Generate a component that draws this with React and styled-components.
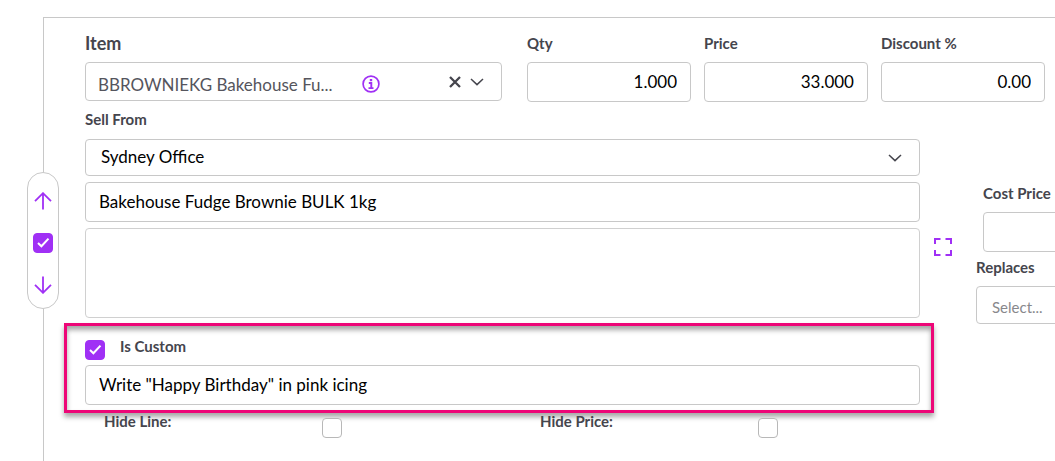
import React, { useState } from "react";
import styled, { createGlobalStyle } from "styled-components";

const ChevronIcon = () => (
  <svg width="14" height="8" viewBox="0 0 14 8" fill="none" aria-hidden="true">
    <path d="M1 1l6 5.600L13 1" stroke="#45454d" strokeWidth="1.500" />
  </svg>
);

const ClearIcon = () => (
  <svg width="12" height="12" viewBox="0 0 12 12" fill="none" aria-hidden="true">
    <path d="m1 1 10 10M11 1 1 11" stroke="#45454d" strokeWidth="2.300" />
  </svg>
);

const InfoIcon = () => (
  <svg width="18" height="18" viewBox="0 0 18 18" fill="none" aria-hidden="true">
    <circle cx="9" cy="9" r="7.900" stroke="#a030f5" strokeWidth="1.700" />
    <rect x="7.800" y="4" width="2.400" height="2.200" fill="#a030f5" />
    <path d="M6.800 8h2.500v5M6.500 13.100h5" stroke="#a030f5" strokeWidth="1.900" />
  </svg>
);

const ArrowIcon = ({ down }) => (
  <svg width="18" height="18" viewBox="0 0 18 18" fill="none" aria-hidden="true">
    <path
      d={down ? "M9 .5v16M1 8.800l8 8 8-8" : "M9 17.500v-16M1 9.200l8-8 8 8"}
      stroke="#a030f5"
      strokeWidth="1.800"
    />
  </svg>
);

const ExpandIcon = () => (
  <svg width="18" height="18" viewBox="0 0 18 18" fill="none" aria-hidden="true">
    <path
      d="M1 6V1h5.500M11.500 1H17v5M17 12v5h-5.500M6.500 17H1v-5"
      stroke="#a030f5"
      strokeWidth="2"
    />
  </svg>
);

const Checkbox = ({ id, defaultChecked = false, label }) => {
  const [isChecked, setIsChecked] = useState(defaultChecked);

  return (
    <CheckWrap>
      <CheckInput
        type="checkbox"
        id={id}
        aria-label={label}
        checked={isChecked}
        onChange={() => setIsChecked(!isChecked)}
      />
      {isChecked && (
        <CheckMark viewBox="0 0 20 20" aria-hidden="true">
          <path d="m5 10 3.400 3.300L15.500 5.600" />
        </CheckMark>
      )}
    </CheckWrap>
  );
};

const amounts = [
  { id: "qty", label: "Qty", value: "1.000" },
  { id: "price", label: "Price", value: "33.000" },
  { id: "discount", label: "Discount %", value: "0.00" },
];

const App = () => {
  return (
    <Page>
      <GlobalStyle />
      <Panel>
        <TopRow>
          <Field>
            <ItemLabel htmlFor="item">Item</ItemLabel>
            <ItemBox>
              <ItemInput id="item" readOnly value="BBROWNIEKG Bakehouse Fu..." />
              <InfoButton type="button" aria-label="Item details">
                <InfoIcon />
              </InfoButton>
              <ItemActions>
                <IconButton type="button" aria-label="Clear item">
                  <ClearIcon />
                </IconButton>
                <IconButton type="button" aria-label="Open item list">
                  <ChevronIcon />
                </IconButton>
              </ItemActions>
            </ItemBox>
          </Field>
          <Amounts>
            {amounts.map((amount) => (
              <Field key={amount.id}>
                <Label htmlFor={amount.id}>{amount.label}</Label>
                <AmountInput id={amount.id} defaultValue={amount.value} />
              </Field>
            ))}
          </Amounts>
        </TopRow>

        <Body>
          <div>
            <Details>
              <SellFromLabel htmlFor="sellFrom">Sell From</SellFromLabel>
              <SelectWrap>
                <Select id="sellFrom">
                  <option>Sydney Office</option>
                </Select>
                <SelectArrow>
                  <ChevronIcon />
                </SelectArrow>
              </SelectWrap>
              <TextInput
                aria-label="Description"
                defaultValue="Bakehouse Fudge Brownie BULK 1kg"
              />
              <Notes aria-label="Notes" />
              <ExpandButton type="button" aria-label="Expand notes">
                <ExpandIcon />
              </ExpandButton>
              <Highlight>
                <CustomRow>
                  <Checkbox id="isCustom" defaultChecked />
                  <CustomLabel htmlFor="isCustom">Is Custom</CustomLabel>
                </CustomRow>
                <TextInput
                  aria-label="Custom text"
                  defaultValue={'Write "Happy Birthday" in pink icing'}
                />
              </Highlight>
            </Details>
            <HideRow>
              <HideLabel htmlFor="hideLine">Hide Line:</HideLabel>
              <Checkbox id="hideLine" />
              <HideLabel htmlFor="hidePrice">Hide Price:</HideLabel>
              <Checkbox id="hidePrice" />
            </HideRow>
          </div>

          <Side>
            <CostField>
              <Label htmlFor="costPrice">Cost Price</Label>
              <TextInput id="costPrice" />
            </CostField>
            <Field>
              <Label htmlFor="replaces">Replaces</Label>
              <ReplacesSelect id="replaces">
                <option>Select...</option>
              </ReplacesSelect>
            </Field>
          </Side>
        </Body>
      </Panel>

      <LineControls>
        <IconButton type="button" aria-label="Move line up">
          <ArrowIcon />
        </IconButton>
        <Checkbox id="lineSelected" label="Select line" defaultChecked />
        <IconButton type="button" aria-label="Move line down">
          <ArrowIcon down />
        </IconButton>
      </LineControls>
    </Page>
  );
};

export default App;

const GlobalStyle = createGlobalStyle`
  * {
    box-sizing: border-box;
  }

  body {
    margin: 0;
    background-color: #fff;
    font-family: Lato, "Liberation Sans", sans-serif;
  }

  button,
  input,
  select,
  textarea {
    margin: 0;
    font-family: inherit;
    font-size: 17px;
  }
`;

const Page = styled.main`
  position: relative;
  display: flex;
  min-height: 100vh;
  padding: 17px 0 0 43px;
`;

const Panel = styled.section`
  flex: 1;
  min-width: 0;
  padding: 15px 0 0 41px;
  border-top: 1px solid #c8c8c8;
  border-left: 1px solid #c8c8c8;
  overflow: hidden;
`;

const TopRow = styled.div`
  display: grid;
  grid-template-columns: 417fr 518fr;
  gap: 25px;
  padding-right: 10px;
`;

const Amounts = styled.div`
  display: grid;
  grid-template-columns: 1fr 1fr 1fr;
  gap: 13px;
`;

const Field = styled.div`
  display: flex;
  flex-direction: column;
  gap: 9px;
  min-width: 0;
`;

const Label = styled.label`
  color: #45454d;
  font-size: 15px;
  font-weight: 700;
  line-height: 20px;
`;

const ItemLabel = styled(Label)`
  font-size: 18px;
`;

const SellFromLabel = styled(Label)`
  margin-bottom: 4px;
`;

const TextInput = styled.input`
  width: 100%;
  height: 40px;
  padding: 0 13px 2px;
  border: 1px solid #c8c8c8;
  border-radius: 4px;
  background-color: #fff;
  color: #000;
`;

const AmountInput = styled(TextInput)`
  text-align: right;
`;

const ItemBox = styled.div`
  display: flex;
  align-items: center;
  height: 39px;
  padding: 0 17px 0 12px;
  border: 1px solid #c8c8c8;
  border-radius: 4px;
`;

const ItemInput = styled.input`
  width: 264px;
  min-width: 0;
  height: 37px;
  padding: 5px 0 0;
  border: 0;
  background: none;
  color: #55555d;
  text-overflow: ellipsis;
`;

const IconButton = styled.button`
  display: flex;
  padding: 0;
  border: 0;
  background: none;
  cursor: pointer;
`;

const InfoButton = styled(IconButton)`
  padding-top: 4px;
`;

const ItemActions = styled.div`
  display: flex;
  align-items: center;
  gap: 9px;
  margin-left: auto;
`;

const Body = styled.div`
  display: grid;
  grid-template-columns: 1fr 79px;
  margin-top: 7px;
`;

const Details = styled.div`
  display: grid;
  grid-template-columns: 1fr 56px;
  row-gap: 6px;

  & > * {
    grid-column: 1;
  }
`;

const SelectWrap = styled.div`
  display: grid;
  align-items: center;
`;

const Select = styled.select`
  grid-area: 1 / 1;
  width: 100%;
  height: 37px;
  padding: 0 15px 2px;
  border: 1px solid #c8c8c8;
  border-radius: 4px;
  background-color: #fff;
  color: #000;
  appearance: none;
`;

const SelectArrow = styled.span`
  display: flex;
  grid-area: 1 / 1;
  justify-self: end;
  margin-right: 18px;
  pointer-events: none;
`;

const Notes = styled.textarea`
  display: block;
  grid-row: 4;
  height: 90px;
  padding: 8px 13px;
  border: 1px solid #d0d0d0;
  border-radius: 4px;
  resize: none;
`;

const ExpandButton = styled(IconButton)`
  grid-row: 4;
  grid-column: 2;
  align-self: start;
  padding: 10px 14px;
`;

const Highlight = styled.div`
  display: flex;
  flex-direction: column;
  gap: 5px;
  margin: -1px -14px 0 -21px;
  padding: 14px 11px 5px 18px;
  border: 3px solid #ed0677;
  box-shadow: 0 4px 5px rgba(0, 0, 0, 0.35), inset 0 4px 5px rgba(0, 0, 0, 0.35);
`;

const CustomRow = styled.div`
  display: flex;
  gap: 15px;
`;

const CustomLabel = styled(Label)`
  line-height: 12px;
`;

const HideRow = styled.div`
  display: grid;
  grid-template-columns: repeat(4, 1fr);
  align-items: end;
  padding: 5px 0 0 19px;
`;

const HideLabel = styled(Label)`
  align-self: start;
  line-height: 6px;
`;

const CheckWrap = styled.span`
  display: grid;
  width: 20px;
  height: 20px;
`;

const CheckInput = styled.input`
  grid-area: 1 / 1;
  width: 20px;
  height: 20px;
  border: 1px solid #b8b8b8;
  border-radius: 4px;
  background-color: #fff;
  appearance: none;
  cursor: pointer;

  &:checked {
    border-color: #a030f5;
    background-color: #a030f5;
  }
`;

const CheckMark = styled.svg`
  grid-area: 1 / 1;
  width: 20px;
  height: 20px;
  fill: none;
  stroke: #fff;
  stroke-width: 2;
  pointer-events: none;
`;

const Side = styled.div`
  display: flex;
  flex-direction: column;
  gap: 5px;
  width: 170px;
  padding-top: 74px;
`;

const CostField = styled(Field)`
  padding-left: 7px;
`;

const ReplacesSelect = styled(Select)`
  height: 38px;
  padding: 4px 15px 0;
  color: #88888c;
  font-size: 15px;
`;

const LineControls = styled.div`
  position: absolute;
  top: 172px;
  left: 27px;
  display: flex;
  flex-direction: column;
  align-items: center;
  justify-content: space-between;
  width: 32px;
  height: 137px;
  padding: 19px 0 14px;
  border: 1px solid #c8c8c8;
  border-radius: 16px;
  background-color: #fff;
`;
